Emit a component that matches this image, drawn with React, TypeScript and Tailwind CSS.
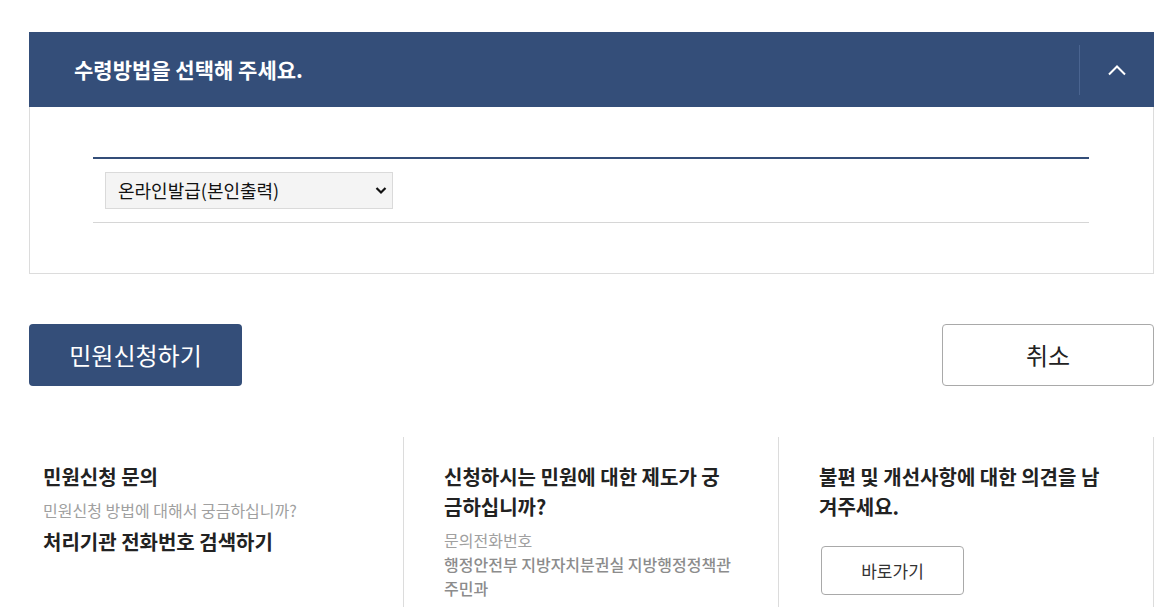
import React, { useState } from 'react';

const font = { fontFamily: '"Noto Sans CJK KR", "Noto Sans", sans-serif' };

const ChevronUp: React.FC = () => (
  <svg width="20" height="12" viewBox="0 0 20 12" fill="none">
    <path d="M2 10.5 L10 2.5 L18 10.5" stroke="#fff" strokeWidth="2" />
  </svg>
);

const App: React.FC = () => {
  const [open, setOpen] = useState(true);
  const [method, setMethod] = useState('online');

  return (
    <div className="bg-white min-h-[607px] pl-[29px] pr-[21px] pt-[32px] text-[#222]" style={font}>
      {/* 수령방법 선택 */}
      <section>
        <div className="flex h-[75px] items-center bg-[#344e79]">
          <h2 className="flex-1 pl-[45px] text-[21px] font-bold text-white">
            수령방법을 선택해 주세요.
          </h2>
          <button
            onClick={() => setOpen(!open)}
            className="flex h-[50px] w-[75px] items-center justify-center border-l border-[#4a6490]"
          >
            <ChevronUp />
          </button>
        </div>
        {open && (
          <div className="border border-t-0 border-[#dcdcdc] pl-[63px] pr-[64px] pt-[50px] pb-[50px]">
            <div className="border-t-2 border-b border-t-[#344e79] border-b-[#d6d6d6] pl-[12px] pt-[13px] pb-[13px]">
              <div className="relative w-[288px]">
                <select
                  value={method}
                  onChange={(e) => setMethod(e.target.value)}
                  className="h-[37px] w-full appearance-none border border-[#dadada] bg-[#f4f4f4] pl-[12px] text-[18px] text-[#111] outline-none"
                  style={font}
                >
                  <option value="online">온라인발급(본인출력)</option>
                  <option value="visit">방문수령</option>
                  <option value="post">우편수령</option>
                </select>
                <svg
                  className="pointer-events-none absolute right-[6px] top-[14px]"
                  width="12"
                  height="9"
                  viewBox="0 0 12 9"
                >
                  <path d="M1.5 2 L6 6.5 L10.5 2" stroke="#111" strokeWidth="2.2" fill="none" />
                </svg>
              </div>
            </div>
          </div>
        )}
      </section>

      {/* 버튼 */}
      <div className="mt-[50px] flex justify-between">
        <button className="h-[62px] w-[213px] rounded-[4px] bg-[#344e79] text-[24px] text-white">
          민원신청하기
        </button>
        <button className="h-[62px] w-[212px] rounded-[4px] border border-[#a9a9a9] bg-white text-[24px] text-[#222]">
          취소
        </button>
      </div>

      {/* 안내 */}
      <div className="mt-[51px] grid grid-cols-3">
        <div className="min-h-[170px] border-r border-[#dcdcdc] pl-[14px] pr-[40px] pt-[25px]">
          <h3 className="text-[20px] font-bold leading-[30px] text-[#222]">민원신청 문의</h3>
          <p className="mt-[7px] text-[16px] leading-[22px] text-[#a0a0a0]">
            민원신청 방법에 대해서 궁금하십니까?
          </p>
          <a className="mt-[6px] block text-[20px] font-bold leading-[30px] text-[#222]">
            처리기관 전화번호 검색하기
          </a>
        </div>
        <div className="border-r border-[#dcdcdc] pl-[40px] pr-[40px] pt-[25px]">
          <h3 className="text-[20px] font-bold leading-[30px] text-[#222]">
            신청하시는 민원에 대한 제도가 궁금하십니까?
          </h3>
          <p className="mt-[7px] text-[16px] leading-[22px] text-[#a0a0a0]">문의전화번호</p>
          <p className="mt-[1px] text-[16px] font-medium leading-[24px] text-[#8c8c8c]">
            행정안전부 지방자치분권실 지방행정정책관 주민과
          </p>
        </div>
        <div className="border-r border-[#dcdcdc] pl-[40px] pr-[40px] pt-[25px]">
          <h3 className="text-[20px] font-bold leading-[30px] text-[#222]">
            불편 및 개선사항에 대한 의견을 남겨주세요.
          </h3>
          <button className="ml-[2px] mt-[24px] h-[49px] w-[143px] rounded-[4px] border border-[#a9a9a9] bg-white text-[17px] text-[#333]">
            바로가기
          </button>
        </div>
      </div>
    </div>
  );
};

export default App;
